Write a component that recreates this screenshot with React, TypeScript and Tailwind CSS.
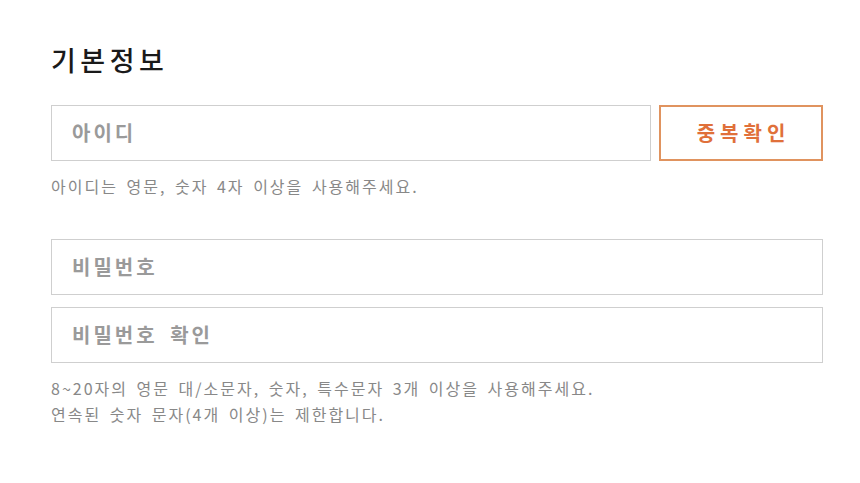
export default function App() {
  return (
    <div className="w-[860px] h-[483px] bg-white font-['Noto_Sans_CJK_KR',sans-serif]">
      <div className="pl-[51px] pr-[37px] pt-[40px]">
        <h2 className="text-[27px] leading-[40px] text-[#1a1a1a] font-medium tracking-[4.5px]">기본정보</h2>
        <div className="mt-[25px] flex gap-[8px]">
          <div className="flex-1 h-[56px] border border-[#cfcfcf] flex items-center pl-[20px]">
            <span className="text-[20px] font-bold text-[#9a9a9a] tracking-[3px] [word-spacing:5px]">아이디</span>
          </div>
          <button className="w-[164px] h-[56px] border-2 border-[#e0935f] flex items-center justify-center pl-[5px] text-[20px] font-bold text-[#e0703a] tracking-[5px]">
            중복확인
          </button>
        </div>
        <p className="mt-[14px] text-[16px] leading-[22px] text-[#888] tracking-[2px] [word-spacing:3px]">아이디는 영문, 숫자 4자 이상을 사용해주세요.</p>
        <div className="mt-[42px] flex flex-col gap-[12px]">
          <div className="h-[56px] border border-[#cfcfcf] flex items-center pl-[20px]">
            <span className="text-[20px] font-bold text-[#9a9a9a] tracking-[3px] [word-spacing:5px]">비밀번호</span>
          </div>
          <div className="h-[56px] border border-[#cfcfcf] flex items-center pl-[20px]">
            <span className="text-[20px] font-bold text-[#9a9a9a] tracking-[3px] [word-spacing:5px]">비밀번호 확인</span>
          </div>
        </div>
        <p className="mt-[12px] text-[16px] leading-[26px] text-[#888] tracking-[2px] [word-spacing:3px]">
          8~20자의 영문 대/소문자, 숫자, 특수문자 3개 이상을 사용해주세요.
          <br />
          연속된 숫자 문자(4개 이상)는 제한합니다.
        </p>
      </div>
    </div>
  );
}
